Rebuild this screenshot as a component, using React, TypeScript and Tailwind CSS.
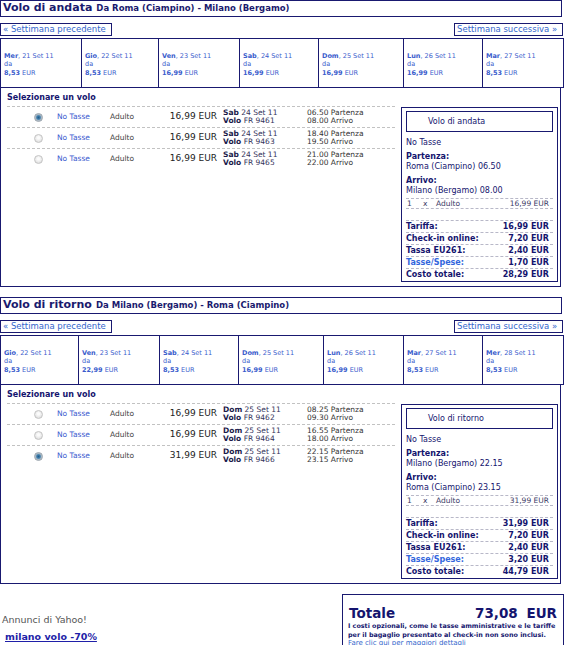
type DateCell = { day: string; date: string; price: string; w: string };
type Flight = { price: string; day: string; date: string; code: string; dep: string; arr: string; selected?: boolean };
type Summary = { title: string; from: string; to: string; fare: string; checkin: string; tax: string; fees: string; total: string };

const outbound = {
  title: "Volo di andata",
  route: "Da Roma (Ciampino) - Milano (Bergamo)",
  dates: [
    { day: "Mer", date: "21 Set 11", price: "8,53", w: "w-[81px]" },
    { day: "Gio", date: "22 Set 11", price: "8,53", w: "w-[77px]" },
    { day: "Ven", date: "23 Set 11", price: "16,99", w: "w-[81px]" },
    { day: "Sab", date: "24 Set 11", price: "16,99", w: "w-[79px]" },
    { day: "Dom", date: "25 Set 11", price: "16,99", w: "w-[85px]" },
    { day: "Lun", date: "26 Set 11", price: "16,99", w: "w-[79px]" },
    { day: "Mar", date: "27 Set 11", price: "8,53", w: "w-[81px]" }
  ] as DateCell[],
  flights: [
    { price: "16,99", day: "Sab", date: "24 Set 11", code: "FR 9461", dep: "06.50", arr: "08.00", selected: true },
    { price: "16,99", day: "Sab", date: "24 Set 11", code: "FR 9463", dep: "18.40", arr: "19.50" },
    { price: "16,99", day: "Sab", date: "24 Set 11", code: "FR 9465", dep: "21.00", arr: "22.00" }
  ] as Flight[],
  summary: {
    title: "Volo di andata",
    from: "Roma (Ciampino) 06.50",
    to: "Milano (Bergamo) 08.00",
    fare: "16,99",
    checkin: "7,20",
    tax: "2,40",
    fees: "1,70",
    total: "28,29"
  } as Summary
};

const inbound = {
  title: "Volo di ritorno",
  route: "Da Milano (Bergamo) - Roma (Ciampino)",
  dates: [
    { day: "Gio", date: "22 Set 11", price: "8,53", w: "w-[78px]" },
    { day: "Ven", date: "23 Set 11", price: "22,99", w: "w-[81px]" },
    { day: "Sab", date: "24 Set 11", price: "8,53", w: "w-[79px]" },
    { day: "Dom", date: "25 Set 11", price: "16,99", w: "w-[85px]" },
    { day: "Lun", date: "26 Set 11", price: "16,99", w: "w-[80px]" },
    { day: "Mar", date: "27 Set 11", price: "8,53", w: "w-[79px]" },
    { day: "Mer", date: "28 Set 11", price: "8,53", w: "w-[81px]" }
  ] as DateCell[],
  flights: [
    { price: "16,99", day: "Dom", date: "25 Set 11", code: "FR 9462", dep: "08.25", arr: "09.30" },
    { price: "16,99", day: "Dom", date: "25 Set 11", code: "FR 9464", dep: "16.55", arr: "18.00" },
    { price: "31,99", day: "Dom", date: "25 Set 11", code: "FR 9466", dep: "22.15", arr: "23.15", selected: true }
  ] as Flight[],
  summary: {
    title: "Volo di ritorno",
    from: "Milano (Bergamo) 22.15",
    to: "Roma (Ciampino) 23.15",
    fare: "31,99",
    checkin: "7,20",
    tax: "2,40",
    fees: "3,20",
    total: "44,79"
  } as Summary
};

function Radio({ checked }: { checked?: boolean }) {
  return checked ? (
    <span className="ml-[27px] block h-[9px] w-[9px] rounded-full border border-[#9aa4ad] bg-[radial-gradient(circle,#245b86_0%,#3f7fae_35%,#a9b8c4_60%,#e2e6ea_100%)]" />
  ) : (
    <span className="ml-[27px] block h-[9px] w-[9px] rounded-full border border-[#c4c4c4] bg-[radial-gradient(circle_at_50%_40%,#fbfbfb_20%,#d4d4d4_100%)]" />
  );
}

function FlightRow({ flight }: { flight: Flight }) {
  return (
    <div className="flex h-[21px] items-center border-t border-dashed border-[#c2c2c2] text-[7.5px]">
      <div className="w-[50px]">
        <Radio checked={flight.selected} />
      </div>
      <div className="w-[53px] text-[#3b5bd0]">No Tasse</div>
      <div className="w-[47px] text-[#444]">Adulto</div>
      <div className="w-[60px] text-right text-[9px] text-[#222]">{flight.price} EUR</div>
      <div className="w-[84px] pl-[6px] leading-[8.5px] text-[#33335a]">
        <div>
          <b className="text-[#1a1a4a]">{flight.day}</b> {flight.date}
        </div>
        <div>
          <b className="text-[#1a1a4a]">Volo</b> {flight.code}
        </div>
      </div>
      <div className="pl-[6px] leading-[8.5px] text-[#333]">
        <div>{flight.dep} Partenza</div>
        <div>{flight.arr} Arrivo</div>
      </div>
    </div>
  );
}

function CostRow({ label, value, blue, last }: { label: string; value: string; blue?: boolean; last?: boolean }) {
  return (
    <div
      className={
        last
          ? "flex h-[12px] items-center justify-between pr-[4px] font-bold"
          : "flex h-[12px] items-center justify-between border-b border-dashed border-[#b8b8c8] pr-[4px] font-bold"
      }
    >
      <span className={blue ? "text-[#3366dd]" : ""}>{label}</span>
      <span>{value} EUR</span>
    </div>
  );
}

function SummaryBox({ s }: { s: Summary }) {
  return (
    <div className="mt-[19px] w-[157px] border border-[#191970] px-[4px] pt-[3px] text-[8px] leading-[10px] text-[#14146e]">
      <div className="flex h-[21px] items-center border border-[#191970] pl-[21px]">{s.title}</div>
      <div className="mt-[6px]">No Tasse</div>
      <div className="mt-[4px] font-bold">Partenza:</div>
      <div>{s.from}</div>
      <div className="mt-[4px] font-bold">Arrivo:</div>
      <div>{s.to}</div>
      <div className="mt-[2px] flex h-[11px] items-center border-y border-dashed border-[#b8b8c8] pr-[4px] text-[7.5px] text-[#3a3a66]">
        <span className="w-[17px] pl-[1px]">1</span>
        <span className="w-[13px]">x</span>
        <span className="flex-1">Adulto</span>
        <span>{s.fare} EUR</span>
      </div>
      <div className="h-[12px] border-b border-dashed border-[#b8b8c8]" />
      <CostRow label="Tariffa:" value={s.fare} />
      <CostRow label="Check-in online:" value={s.checkin} />
      <CostRow label="Tassa EU261:" value={s.tax} />
      <CostRow label="Tasse/Spese:" value={s.fees} blue />
      <CostRow label="Costo totale:" value={s.total} last />
    </div>
  );
}

function FlightSection({ data }: { data: typeof outbound }) {
  return (
    <section>
      <div className="flex h-[17px] w-[562px] items-center gap-[4px] border border-[#191970] pl-[2px] font-bold text-[#1a1a6e]">
        <span className="text-[11px]">{data.title}</span>
        <span className="text-[8.5px]">{data.route}</span>
      </div>

      <div className="mt-[6px] flex h-[13px] justify-between text-[8.5px] leading-[11px] text-[#3366cc]">
        <span className="w-[112px] border border-[#191970] pl-[2px]">« Settimana precedente</span>
        <span className="mr-[2px] w-[109px] border border-[#191970] pl-[2px]">Settimana successiva »</span>
      </div>

      <div className="mt-[2px] flex h-[50px] w-[564px] border-y border-l border-[#191970] text-[6.5px] leading-[8.5px] text-[#3a5ccc]">
        {data.dates.map((d) => (
          <div key={d.day + d.date} className={`${d.w} flex flex-col justify-center border-r border-[#191970] pl-[3px] pt-[3px]`}>
            <div>
              <b>{d.day}</b>, {d.date}
            </div>
            <div>da</div>
            <div>
              <b>{d.price}</b> EUR
            </div>
          </div>
        ))}
      </div>

      <div className="flex h-[199px] w-[561px] border-x border-b border-[#191970]">
        <div className="w-[394px] pl-[6px] pt-[5px]">
          <div className="h-[10px] text-[8px] font-bold leading-[10px] text-[#14146e]">Selezionare un volo</div>
          <div className="mt-[3px]">
            {data.flights.map((f) => (
              <FlightRow key={f.code} flight={f} />
            ))}
          </div>
        </div>
        <div className="ml-[6px]">
          <SummaryBox s={data.summary} />
        </div>
      </div>
    </section>
  );
}

export default function App() {
  return (
    <div className="h-[645px] w-[565px] overflow-hidden bg-white [font-family:'DejaVu_Sans',sans-serif]">
      <FlightSection data={outbound} />
      <div className="mt-[10px]">
        <FlightSection data={inbound} />
      </div>

      <div className="mt-[10px] flex">
        <div className="w-[342px] pt-[20px]">
          <div className="pl-[2px] text-[9.5px] leading-[11px] text-[#555]">Annunci di Yahoo!</div>
          <div className="mt-[6px] pl-[5px] text-[9.5px] font-bold leading-[11px] text-[#1f1fa8] underline">milano volo -70%</div>
        </div>
        <div className="h-[60px] w-[222px] border border-[#191970] px-[5px] pt-[10px] text-[#14146e]">
          <div className="flex justify-between px-[1px] text-[13.5px] font-bold leading-[16px]">
            <span>Totale</span>
            <span className="[word-spacing:4px]">73,08 EUR</span>
          </div>
          <div className="mt-[1px] text-[6.4px] font-bold leading-[8.5px]">
            I costi opzionali, come le tasse amministrative e le tariffe per il bagaglio presentato al check-in non sono inclusi.
          </div>
          <div className="text-[7px] leading-[8px] text-[#3366cc]">Fare clic qui per maggiori dettagli</div>
        </div>
      </div>
    </div>
  );
}
